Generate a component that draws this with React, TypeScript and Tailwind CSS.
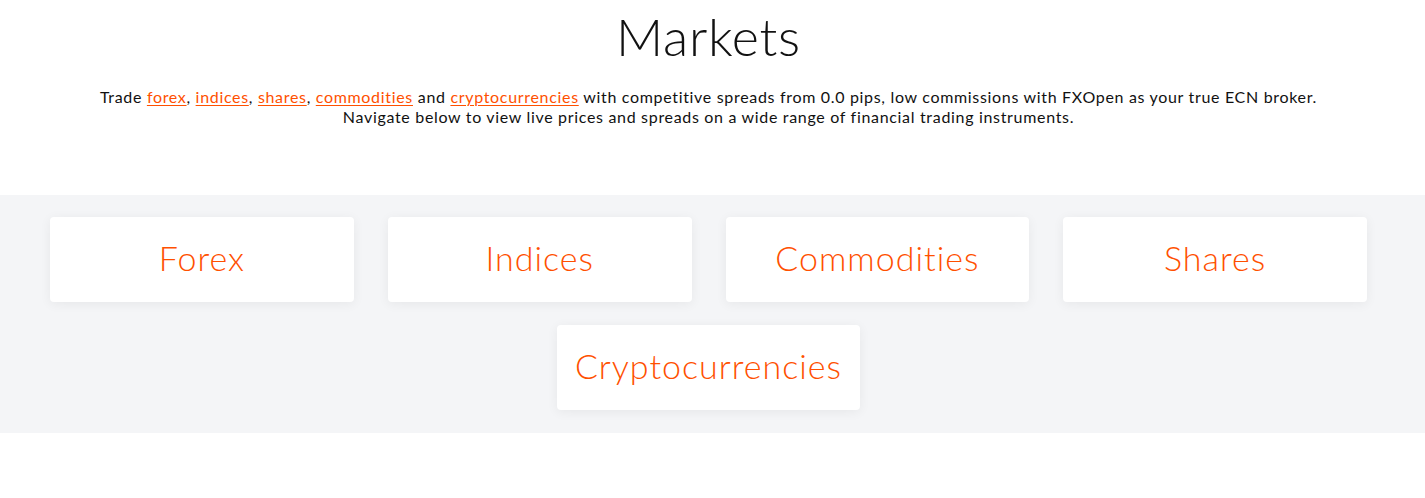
import React from 'react';

const markets = ['Forex', 'Indices', 'Commodities', 'Shares'];

const MarketCard: React.FC<{ name: string }> = ({ name }) => (
  <a
    href="#"
    className="flex h-[85px] items-center justify-center rounded-[4px] bg-white pb-[4px] text-[34px] font-light tracking-[1px] text-[#ff5000] shadow-[0_2px_12px_rgba(0,0,0,0.06)]"
  >
    {name}
  </a>
);

const App: React.FC = () => {
  const link = 'text-[#ff5000] underline underline-offset-2';
  return (
    <div className="min-h-[498px] bg-white font-['Lato','Noto_Sans',sans-serif] text-[#111] [font-variant-ligatures:none]">
      <div className="pr-2 pt-[4px] text-center">
        <h1 className="text-[52px] font-light leading-[64px] tracking-[0.7px] text-[#111]">Markets</h1>
        <p className="mt-[19px] text-[16px] leading-[20px] tracking-[0.68px]">
          Trade <a href="#" className={link}>forex</a>, <a href="#" className={link}>indices</a>,{' '}
          <a href="#" className={link}>shares</a>, <a href="#" className={link}>commodities</a> and{' '}
          <a href="#" className={link}>cryptocurrencies</a> with competitive spreads from 0.0 pips, low commissions
          with FXOpen as your true ECN broker.
          <br />
          Navigate below to view live prices and spreads on a wide range of financial trading instruments.
        </p>
      </div>

      <div className="mt-[68px] bg-[#f4f5f7] pb-[23px] pr-2 pt-[22px]">
        <div className="mx-auto flex w-[1317px] flex-col gap-[23px]">
          <div className="grid grid-cols-4 gap-x-[34px]">
            {markets.map((m) => (
              <MarketCard key={m} name={m} />
            ))}
          </div>
          <div className="flex justify-center">
            <div className="w-[303px]">
              <MarketCard name="Cryptocurrencies" />
            </div>
          </div>
        </div>
      </div>
    </div>
  );
};

export default App;
